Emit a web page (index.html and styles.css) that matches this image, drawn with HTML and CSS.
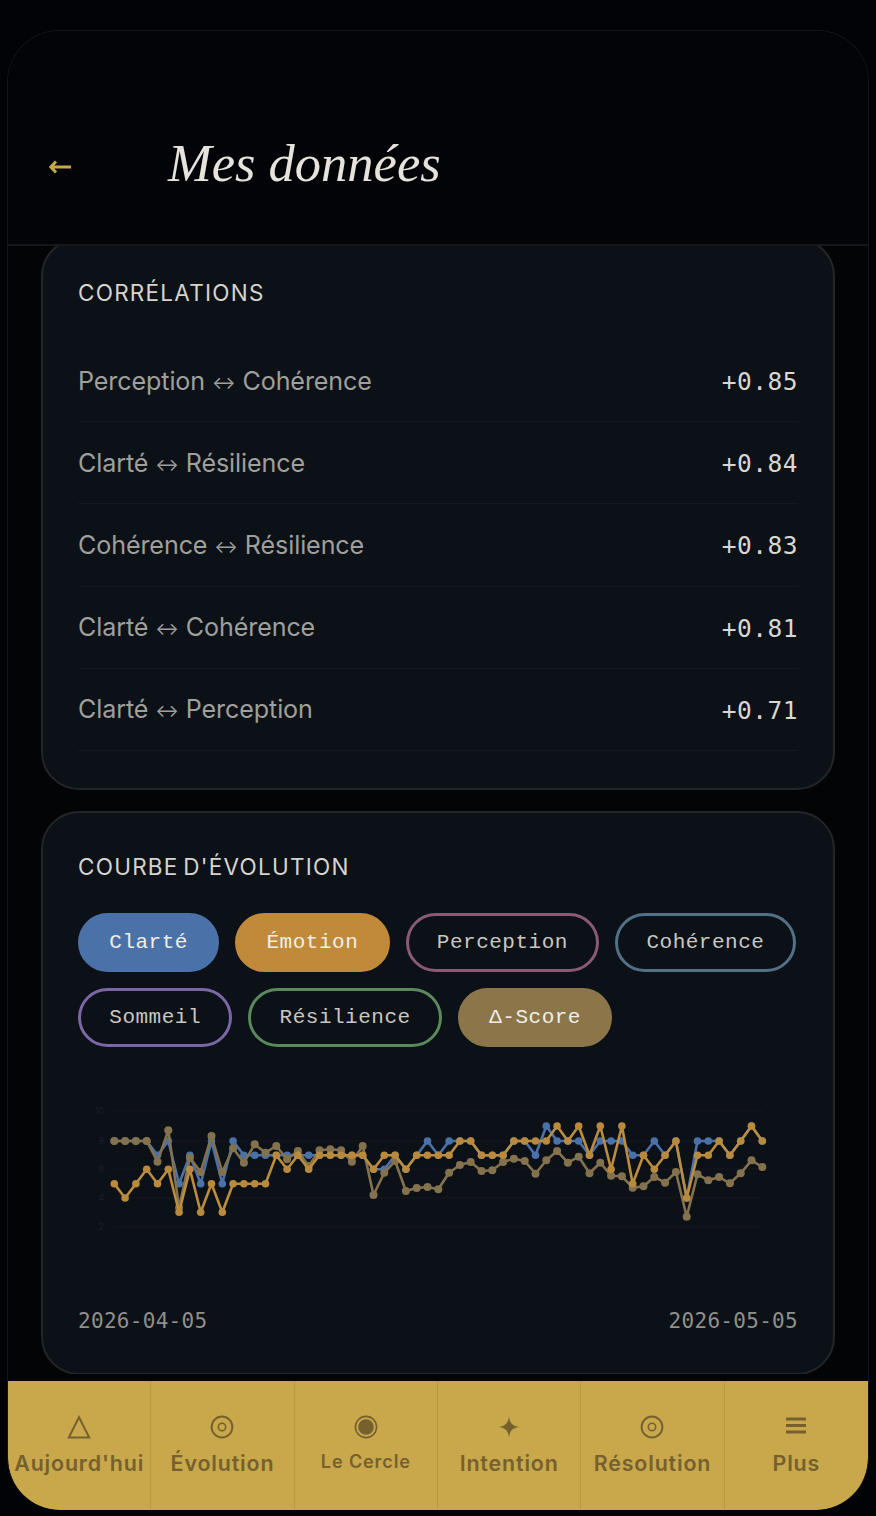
FILE: index.html
```html
<!DOCTYPE html>
<html lang="fr">
<head>
<meta charset="utf-8">
<title>Mes données</title>
<link rel="stylesheet" href="styles.css">
</head>
<body>
<div class="phone">
  <header class="top">
    <svg class="back" viewBox="0 0 22 14" aria-hidden="true"><path d="M7 1.5 1.8 7 7 12.5M2 7H22"/></svg>
    <h1 class="title">Mes données</h1>
  </header>
  <main class="scroll">
    <section class="card first">
      <h2 class="card-title">CORRÉLATIONS</h2>
      <div class="row"><span class="label">Perception <span class="arr">↔</span> Cohérence</span><span class="val">+0.85</span></div>
      <div class="row"><span class="label">Clarté <span class="arr">↔</span> Résilience</span><span class="val">+0.84</span></div>
      <div class="row"><span class="label">Cohérence <span class="arr">↔</span> Résilience</span><span class="val">+0.83</span></div>
      <div class="row"><span class="label">Clarté <span class="arr">↔</span> Cohérence</span><span class="val">+0.81</span></div>
      <div class="row"><span class="label">Clarté <span class="arr">↔</span> Perception</span><span class="val">+0.71</span></div>
    </section>
    <section class="card second">
      <h2 class="card-title">COURBE D'ÉVOLUTION</h2>
      <div class="pills">
        <span class="pill on blue">Clarté</span>
        <span class="pill on amber">Émotion</span>
        <span class="pill rose">Perception</span>
        <span class="pill teal">Cohérence</span>
        <span class="pill violet">Sommeil</span>
        <span class="pill green">Résilience</span>
        <span class="pill on tan">Δ-Score</span>
      </div>
      <svg class="chart" viewBox="0 0 720 190" aria-hidden="true">
        <defs>
          <marker id="dot-b" markerUnits="userSpaceOnUse" markerWidth="10" markerHeight="10" refX="5" refY="5"><circle cx="5" cy="5" r="3.8" fill="#4a72a8"/></marker>
          <marker id="dot-a" markerUnits="userSpaceOnUse" markerWidth="10" markerHeight="10" refX="5" refY="5"><circle cx="5" cy="5" r="3.8" fill="#b98a3c"/></marker>
          <marker id="dot-t" markerUnits="userSpaceOnUse" markerWidth="10" markerHeight="10" refX="5" refY="5"><circle cx="5" cy="5" r="4" fill="#84724e"/></marker>
        </defs>
        <g class="grid">
          <line x1="36" x2="685" y1="20" y2="20"/><line x1="36" x2="685" y1="50" y2="50"/><line x1="36" x2="685" y1="78" y2="78"/><line x1="36" x2="685" y1="107" y2="107"/><line x1="36" x2="685" y1="136" y2="136"/>
        </g>
        <g class="ticks">
          <text x="26" y="23">10</text><text x="26" y="53">8</text><text x="26" y="81">6</text><text x="26" y="110">4</text><text x="26" y="139">2</text>
        </g>
        <polyline class="line l-blue" points="36.3,50 47.1,50 57.9,50 68.7,50 79.5,64.3 90.3,50 101.1,92.7 111.9,64.3 122.7,92.7 133.5,50 144.3,92.7 155.1,50 165.9,64.3 176.7,64.3 187.5,64.3 198.3,64.3 209.1,64.3 219.9,64.3 230.7,64.3 241.5,64.3 252.3,64.3 263.1,64.3 273.9,64.3 284.7,64.3 295.5,78.3 306.3,78.3 317.1,64.3 327.9,78.3 338.7,64.3 349.5,50 360.3,64.3 371.1,50 381.9,50 392.7,50 403.5,64.3 414.3,64.3 425.1,64.3 435.9,50 446.7,50 457.5,64.3 468.3,35 479.1,50 489.9,50 500.7,50 511.5,64.3 522.3,50 533.1,50 543.9,50 554.7,64.3 565.5,64.3 576.3,50 587.1,64.3 597.9,50 608.7,107 619.5,50 630.3,50 641.1,50 651.9,64.3 662.7,50 673.5,35 684.3,50"/>
        <polyline class="line l-tan" points="36.3,50 47.1,50 57.9,50 68.7,50 79.5,70.7 90.3,39.3 101.1,116.7 111.9,66.7 122.7,81 133.5,45 144.3,81 155.1,57.3 165.9,71.7 176.7,53.3 187.5,61.7 198.3,55 209.1,68.3 219.9,60 230.7,75 241.5,59.3 252.3,58.3 263.1,59.3 273.9,70.7 284.7,55 295.5,104 306.3,81.7 317.1,70 327.9,100 338.7,97 349.5,96 360.3,98.3 371.1,81.7 381.9,74 392.7,71 403.5,80 414.3,79.3 425.1,71 435.9,67.7 446.7,70 457.5,82.7 468.3,69.3 479.1,60 489.9,71.7 500.7,65.7 511.5,82.3 522.3,71.7 533.1,84.7 543.9,85.3 554.7,96.7 565.5,95.3 576.3,86 587.1,91.7 597.9,81 608.7,125.7 619.5,83.3 630.3,89.3 641.1,86 651.9,92.3 662.7,82.3 673.5,69.3 684.3,76"/>
        <polyline class="line l-amber" points="36.3,92.7 47.1,107 57.9,92.7 68.7,78.3 79.5,92.7 90.3,78.3 101.1,121.3 111.9,78.3 122.7,121.3 133.5,92.7 144.3,121.3 155.1,92.7 165.9,92.7 176.7,92.7 187.5,92.7 198.3,64.3 209.1,78.3 219.9,64.3 230.7,78.3 241.5,64.3 252.3,64.3 263.1,64.3 273.9,64.3 284.7,64.3 295.5,78.3 306.3,64.3 317.1,64.3 327.9,78.3 338.7,64.3 349.5,64.3 360.3,64.3 371.1,64.3 381.9,50 392.7,50 403.5,64.3 414.3,64.3 425.1,64.3 435.9,50 446.7,50 457.5,50 468.3,50 479.1,35 489.9,50 500.7,35 511.5,64.3 522.3,35 533.1,78.3 543.9,35 554.7,92.7 565.5,64.3 576.3,78.3 587.1,64.3 597.9,50 608.7,107 619.5,64.3 630.3,64.3 641.1,50 651.9,64.3 662.7,50 673.5,35 684.3,50"/>
      </svg>
      <div class="dates"><span>2026-04-05</span><span>2026-05-05</span></div>
    </section>
  </main>
  <nav class="nav">
    <a class="tab">
      <svg class="ico" viewBox="0 0 24 24" aria-hidden="true"><path class="st" d="M12 2.2 22.2 22.5H1.8Z"/></svg>
      <span class="tab-label">Aujourd'hui</span>
    </a>
    <a class="tab">
      <svg class="ico" viewBox="0 0 24 24" aria-hidden="true"><circle class="st" cx="12" cy="12" r="10.4"/><circle class="st thin" cx="12" cy="12" r="3.7"/></svg>
      <span class="tab-label">Évolution</span>
    </a>
    <a class="tab">
      <svg class="ico" viewBox="0 0 24 24" aria-hidden="true"><circle class="st thin" cx="12" cy="12" r="10.6"/><circle class="fi" cx="12" cy="12" r="7.8"/></svg>
      <span class="tab-label small">Le Cercle</span>
    </a>
    <a class="tab">
      <svg class="ico" viewBox="0 0 24 24" aria-hidden="true"><path class="fi" d="M12 1.6C12.9 8 15 11 22 12 15 13 12.9 16 12 22.4 11.1 16 9 13 2 12 9 11 11.1 8 12 1.6Z"/></svg>
      <span class="tab-label">Intention</span>
    </a>
    <a class="tab">
      <svg class="ico" viewBox="0 0 24 24" aria-hidden="true"><circle class="st" cx="12" cy="12" r="10.4"/><circle class="st thin" cx="12" cy="12" r="3.7"/></svg>
      <span class="tab-label">Résolution</span>
    </a>
    <a class="tab">
      <svg class="ico" viewBox="0 0 24 24" aria-hidden="true"><path class="fi" d="M2 2.5H22V5.5H2ZM2 9H22V12H2ZM2 15.5H22V18.5H2Z"/></svg>
      <span class="tab-label">Plus</span>
    </a>
  </nav>
</div>
</body>
</html>
```
FILE: styles.css
```css
* { box-sizing: border-box; margin: 0; padding: 0; }
html, body { height: 100%; }
body {
  background: #010306;
  padding: 30px 7px 6px;
  font-family: "Inter", "Noto Sans", sans-serif;
  overflow: hidden;
}
.phone {
  height: 1480px;
  border: 1px solid #14161a;
  border-bottom: 0;
  border-radius: 52px;
  background: #030406;
  display: flex;
  flex-direction: column;
  overflow: hidden;
}
.top {
  flex: 0 0 215px;
  border-bottom: 2px solid #15171a;
  background: #030407;
  display: flex;
  align-items: center;
  gap: 97px;
  padding: 50px 0 0 41px;
  position: relative;
  z-index: 2;
}
.back { width: 22px; height: 14px; margin-top: 8px; fill: none; stroke: #c8a84b; stroke-width: 3; }
.title {
  font-family: "Liberation Serif", serif;
  font-style: italic;
  font-weight: 400;
  font-size: 52.5px;
  line-height: 60px;
  color: #e6e3dc;
}
.scroll {
  flex: 1;
  overflow: hidden;
  padding: 0 33px;
  display: flex;
  flex-direction: column;
  gap: 21px;
}
.card {
  flex: none;
  background: #0c1118;
  border: 2px solid #242528;
  border-radius: 38px;
  padding: 0 35px;
}
.first { margin-top: -8px; height: 552px; padding-top: 39px; }
.second { height: 564px; padding-top: 40px; }
.card-title {
  font-weight: 400;
  font-size: 22.5px;
  line-height: 28px;
  letter-spacing: 1.25px;
  word-spacing: -3px;
  color: #d6d4cd;
}
.first .card-title { margin-bottom: 33px; }
.row {
  height: 82.2px;
  display: flex;
  justify-content: space-between;
  align-items: center;
  border-bottom: 1px solid #141820;
  padding-top: 2px;
}
.label { font-size: 25.1px; letter-spacing: -0.1px; margin-top: -2px; color: #9f9f9b; }
.arr { font-size: 17.6px; vertical-align: 1px; }
.val {
  font-family: "DejaVu Sans Mono", monospace;
  font-size: 24.5px;
  letter-spacing: 0.5px;
  color: #d9d7d0;
}
.pills {
  display: flex;
  flex-wrap: wrap;
  gap: 16px;
  margin-top: 32px;
}
.pill {
  height: 59px;
  padding: 0 28.3px;
  border: 3px solid;
  border-radius: 30px;
  display: flex;
  align-items: center;
  font-family: "Liberation Mono", monospace;
  font-size: 21px;
  letter-spacing: 0.5px;
  color: #c8c7c1;
}
.pill.on { color: #f1eee6; }
.blue { background: #4a72a8; border-color: #4a72a8; }
.amber { background: #c08a3a; border-color: #c08a3a; }
.tan { background: #8c7549; border-color: #8c7549; }
.rose { border-color: #8a5a72; }
.teal { border-color: #527186; }
.violet { border-color: #7b66a6; }
.green { border-color: #5a8a5c; }
.chart { display: block; width: 720px; height: 190px; margin-top: 44px; }
.grid line { stroke: #14171c; stroke-width: 1; }
.ticks text { font-family: "Inter", sans-serif; font-size: 9px; fill: #1d2026; text-anchor: end; }
.line { fill: none; stroke-linejoin: round; }
.l-blue { stroke: #4a72a8; stroke-width: 2.6; marker-start: url(#dot-b); marker-mid: url(#dot-b); marker-end: url(#dot-b); }
.l-tan { stroke: #84724e; stroke-width: 2.6; marker-start: url(#dot-t); marker-mid: url(#dot-t); marker-end: url(#dot-t); }
.l-amber { stroke: #bd8d3e; stroke-width: 2.6; marker-start: url(#dot-a); marker-mid: url(#dot-a); marker-end: url(#dot-a); }
.dates {
  display: flex;
  justify-content: space-between;
  margin-top: 28px;
  font-family: "DejaVu Sans Mono", monospace;
  font-size: 21px;
  letter-spacing: 0.3px;
  color: #8f8f8b;
}
.nav {
  flex: 0 0 129px;
  margin-top: 7px;
  background: #c8a84b;
  display: grid;
  grid-template-columns: repeat(6, 1fr);
  border-radius: 0 0 52px 52px;
}
.tab {
  display: flex;
  flex-direction: column;
  align-items: center;
  padding-top: 34px;
  border-right: 1px solid #b8993f;
  white-space: nowrap;
}
.tab:last-child { border-right: 0; }
.ico { width: 24px; height: 24px; display: block; }
.st { fill: none; stroke: #75602e; stroke-width: 2; }
.st.thin { stroke-width: 1.6; }
.fi { fill: #75602e; }
.tab-label {
  margin-top: 10px;
  font-weight: 600;
  font-size: 21.4px;
  line-height: 28px;
  letter-spacing: 0.85px;
  color: #75602e;
}
.tab-label.small { font-size: 18px; margin-top: 9px; letter-spacing: 0.9px; }
```
